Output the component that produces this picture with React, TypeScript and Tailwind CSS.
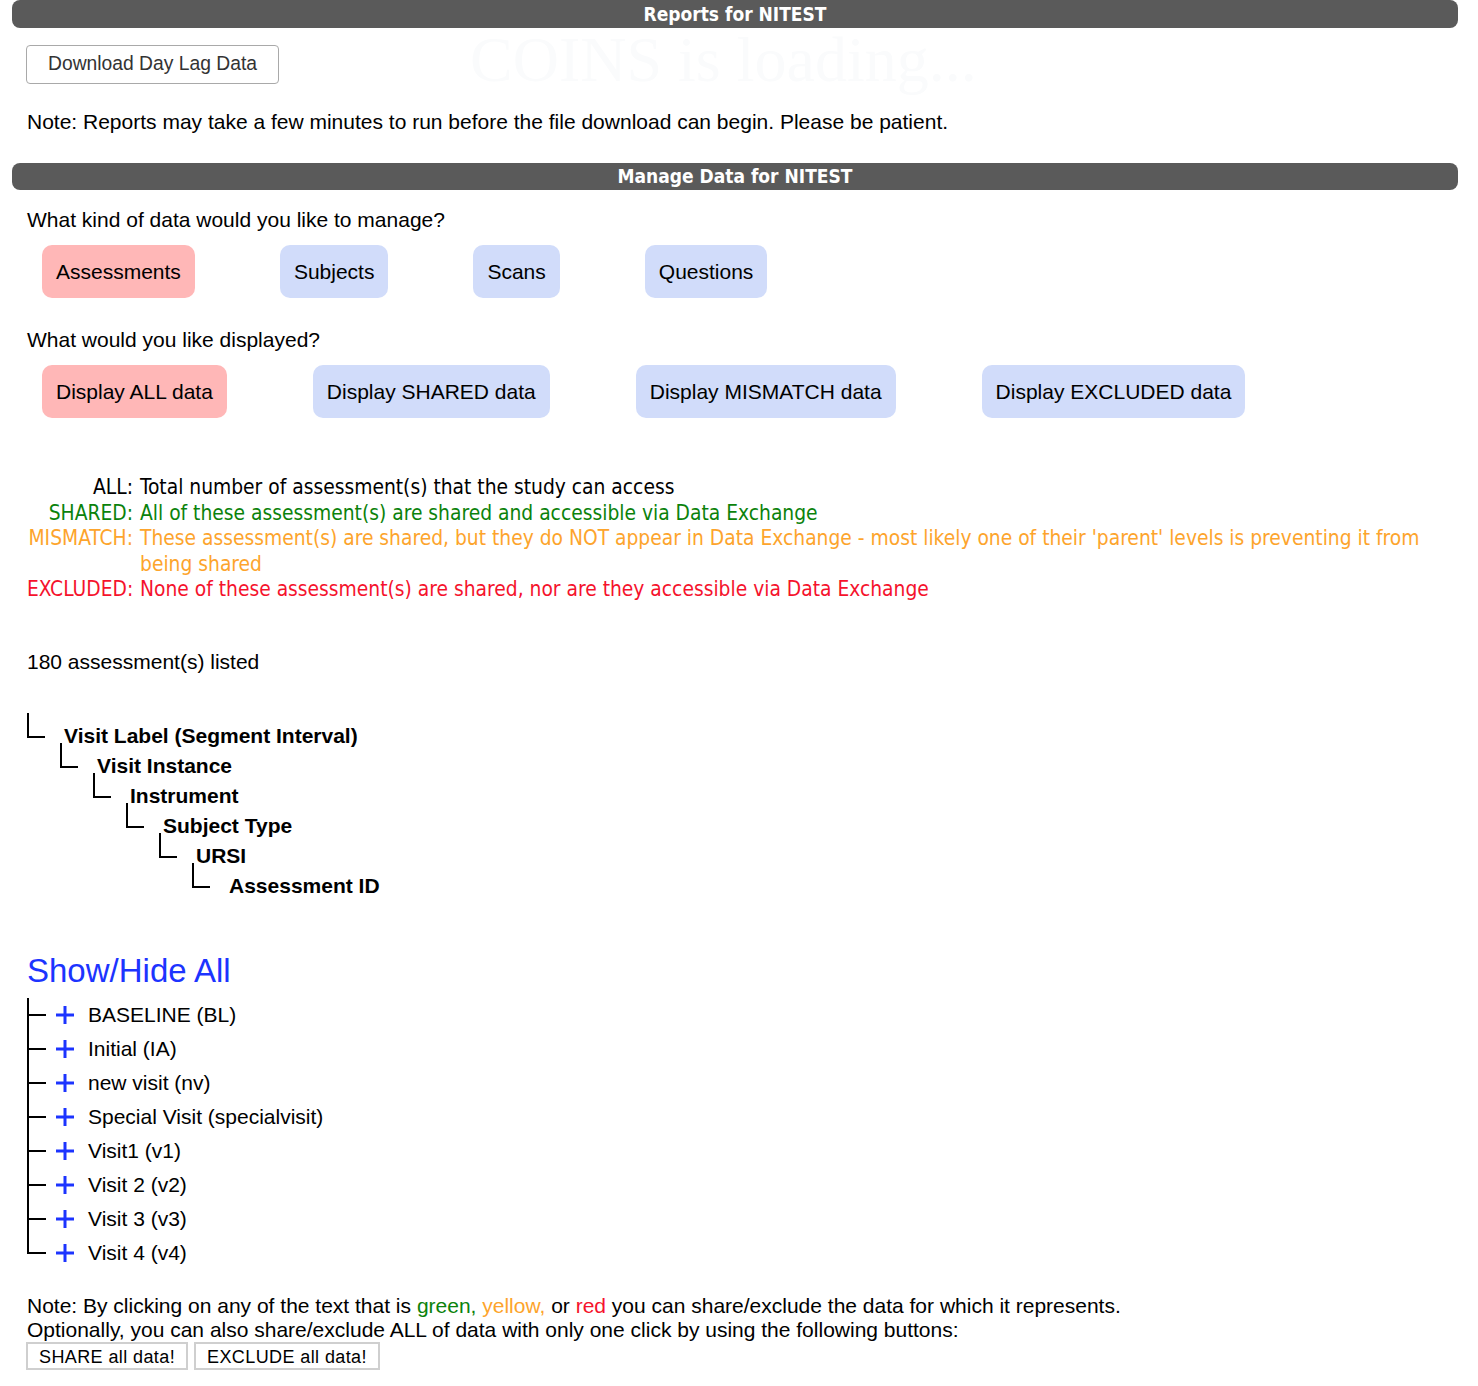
import { FC, ReactNode } from 'react';

const body = "font-['Liberation_Sans',Arial,sans-serif]";
const cond = "font-['DejaVu_Sans_Condensed','DejaVu_Sans',sans-serif]";

const SectionBar: FC<{ title: string; className?: string }> = ({ title, className = '' }) => (
	<div
		className={`ml-[12px] mr-[20px] rounded-[8px] bg-[#5a5a5a] flex items-center justify-center text-white font-bold text-[19px] leading-none ${cond} ${className}`}
	>
		{title}
	</div>
);

const Pill: FC<{ label: string; active?: boolean }> = ({ label, active }) => (
	<button
		className={`h-[53px] px-[14px] rounded-[10px] text-[21px] text-black ${active ? 'bg-[#ffb7b7]' : 'bg-[#d1dcfa]'}`}
	>
		{label}
	</button>
);

const legend: { label: string; color: string; text: ReactNode }[] = [
	{ label: 'ALL:', color: 'text-black', text: 'Total number of assessment(s) that the study can access' },
	{
		label: 'SHARED:',
		color: 'text-[#0b820b]',
		text: 'All of these assessment(s) are shared and accessible via Data Exchange',
	},
	{
		label: 'MISMATCH:',
		color: 'text-[#fda42c]',
		text: (
			<>
				<span className="whitespace-nowrap">
					These assessment(s) are shared, but they do NOT appear in Data Exchange - most likely one of their 'parent'
					levels is preventing it from
				</span>
				<br />
				being shared
			</>
		),
	},
	{
		label: 'EXCLUDED:',
		color: 'text-[#f5122c]',
		text: 'None of these assessment(s) are shared, nor are they accessible via Data Exchange',
	},
];

const hierarchy = [
	{ label: 'Visit Label (Segment Interval)', indent: 'pl-[0px]' },
	{ label: 'Visit Instance', indent: 'pl-[33px]' },
	{ label: 'Instrument', indent: 'pl-[66px]' },
	{ label: 'Subject Type', indent: 'pl-[99px]' },
	{ label: 'URSI', indent: 'pl-[132px]' },
	{ label: 'Assessment ID', indent: 'pl-[165px]' },
];

const visits = [
	'BASELINE (BL)',
	'Initial (IA)',
	'new visit (nv)',
	'Special Visit (specialvisit)',
	'Visit1 (v1)',
	'Visit 2 (v2)',
	'Visit 3 (v3)',
	'Visit 4 (v4)',
];

const Branch: FC<{ last?: boolean }> = ({ last }) => (
	<svg width="20" height="34" viewBox="0 0 20 34" className="shrink-0">
		<line x1="1" y1="0" x2="1" y2={last ? 18 : 34} stroke="#000" strokeWidth="2" />
		<line x1="0" y1="17" x2="19" y2="17" stroke="#000" strokeWidth="2" />
	</svg>
);

const Plus: FC = () => (
	<svg width="18" height="18" viewBox="0 0 18 18" className="shrink-0">
		<path d="M9 0v18M0 9h18" stroke="#1c34ff" strokeWidth="3" />
	</svg>
);

export default function App() {
	return (
		<div className={`relative w-[1478px] min-h-[1386px] bg-white text-black ${body}`}>
			{/* faint loading splash left behind the page */}
			<div className="absolute left-[470px] top-[28px] text-[64px] leading-none text-[#fafbfc] font-['Liberation_Serif',serif] pointer-events-none select-none">
				COINS is loading...
			</div>

			<SectionBar title="Reports for NITEST" className="h-[28px]" />
			<div className="relative px-[26px]">
				<button className="mt-[17px] h-[39px] px-[21px] rounded-[4px] border border-[#a9a9a9] bg-white text-[19.3px] text-[#333]">
					Download Day Lag Data
				</button>
				<p className="mt-[26px] text-[21px] leading-[24px] pl-px">
					Note: Reports may take a few minutes to run before the file download can begin. Please be patient.
				</p>
			</div>

			<SectionBar title="Manage Data for NITEST" className="mt-[29px] h-[27px]" />
			<div className="px-[27px]">
				<p className="mt-[18px] text-[21px] leading-[24px]">What kind of data would you like to manage?</p>
				<div className="mt-[13px] ml-[15px] flex gap-[85px]">
					<Pill label="Assessments" active />
					<Pill label="Subjects" />
					<Pill label="Scans" />
					<Pill label="Questions" />
				</div>
				<p className="mt-[30px] text-[21px] leading-[24px]">What would you like displayed?</p>
				<div className="mt-[13px] ml-[15px] flex gap-[86px]">
					<Pill label="Display ALL data" active />
					<Pill label="Display SHARED data" />
					<Pill label="Display MISMATCH data" />
					<Pill label="Display EXCLUDED data" />
				</div>

				<div className={`mt-[57px] grid grid-cols-[106px_1fr] gap-x-[7px] text-[20.8px] leading-[25.5px] ${cond}`}>
					{legend.map((row) => (
						<div key={row.label} className={`contents ${row.color}`}>
							<span className="text-right whitespace-nowrap">{row.label}</span>
							<span>{row.text}</span>
						</div>
					))}
				</div>

				<p className="mt-[47px] text-[21px] leading-[24px]">180 assessment(s) listed</p>

				<div className="mt-[47px]">
					{hierarchy.map((h) => (
						<div key={h.label} className={`flex h-[30px] ${h.indent}`}>
							<div className="-mt-[8px] h-[25px] w-[18px] shrink-0 border-l-2 border-b-2 border-black" />
							<span className="ml-[19px] text-[21px] leading-[30px] font-bold">{h.label}</span>
						</div>
					))}
				</div>

				<div className="mt-[50px] text-[33px] leading-[40px] text-[#1c34ff]">Show/Hide All</div>
				<ul className="mt-[7px]">
					{visits.map((v, i) => (
						<li key={v} className="flex items-center h-[34px]">
							<Branch last={i === visits.length - 1} />
							<span className="ml-[9px]">
								<Plus />
							</span>
							<span className="ml-[14px] text-[21px] leading-[24px]">{v}</span>
						</li>
					))}
				</ul>

				<div className="mt-[24px] text-[21px] leading-[24px]">
					<p>
						Note: By clicking on any of the text that is <span className="text-[#0b820b]">green,</span>{' '}
						<span className="text-[#fda42c]">yellow,</span> or <span className="text-[#f5122c]">red</span> you can
						share/exclude the data for which it represents.
					</p>
					<p>Optionally, you can also share/exclude ALL of data with only one click by using the following buttons:</p>
				</div>
				<div className="flex gap-[6px] -ml-px">
					<button className="h-[28px] px-[11px] border-2 border-[#cfcfcf] bg-white text-[18px] tracking-[0.4px]">
						SHARE all data!
					</button>
					<button className="h-[28px] px-[11px] border-2 border-[#cfcfcf] bg-white text-[18px] tracking-[0.4px]">
						EXCLUDE all data!
					</button>
				</div>
			</div>
		</div>
	);
}
